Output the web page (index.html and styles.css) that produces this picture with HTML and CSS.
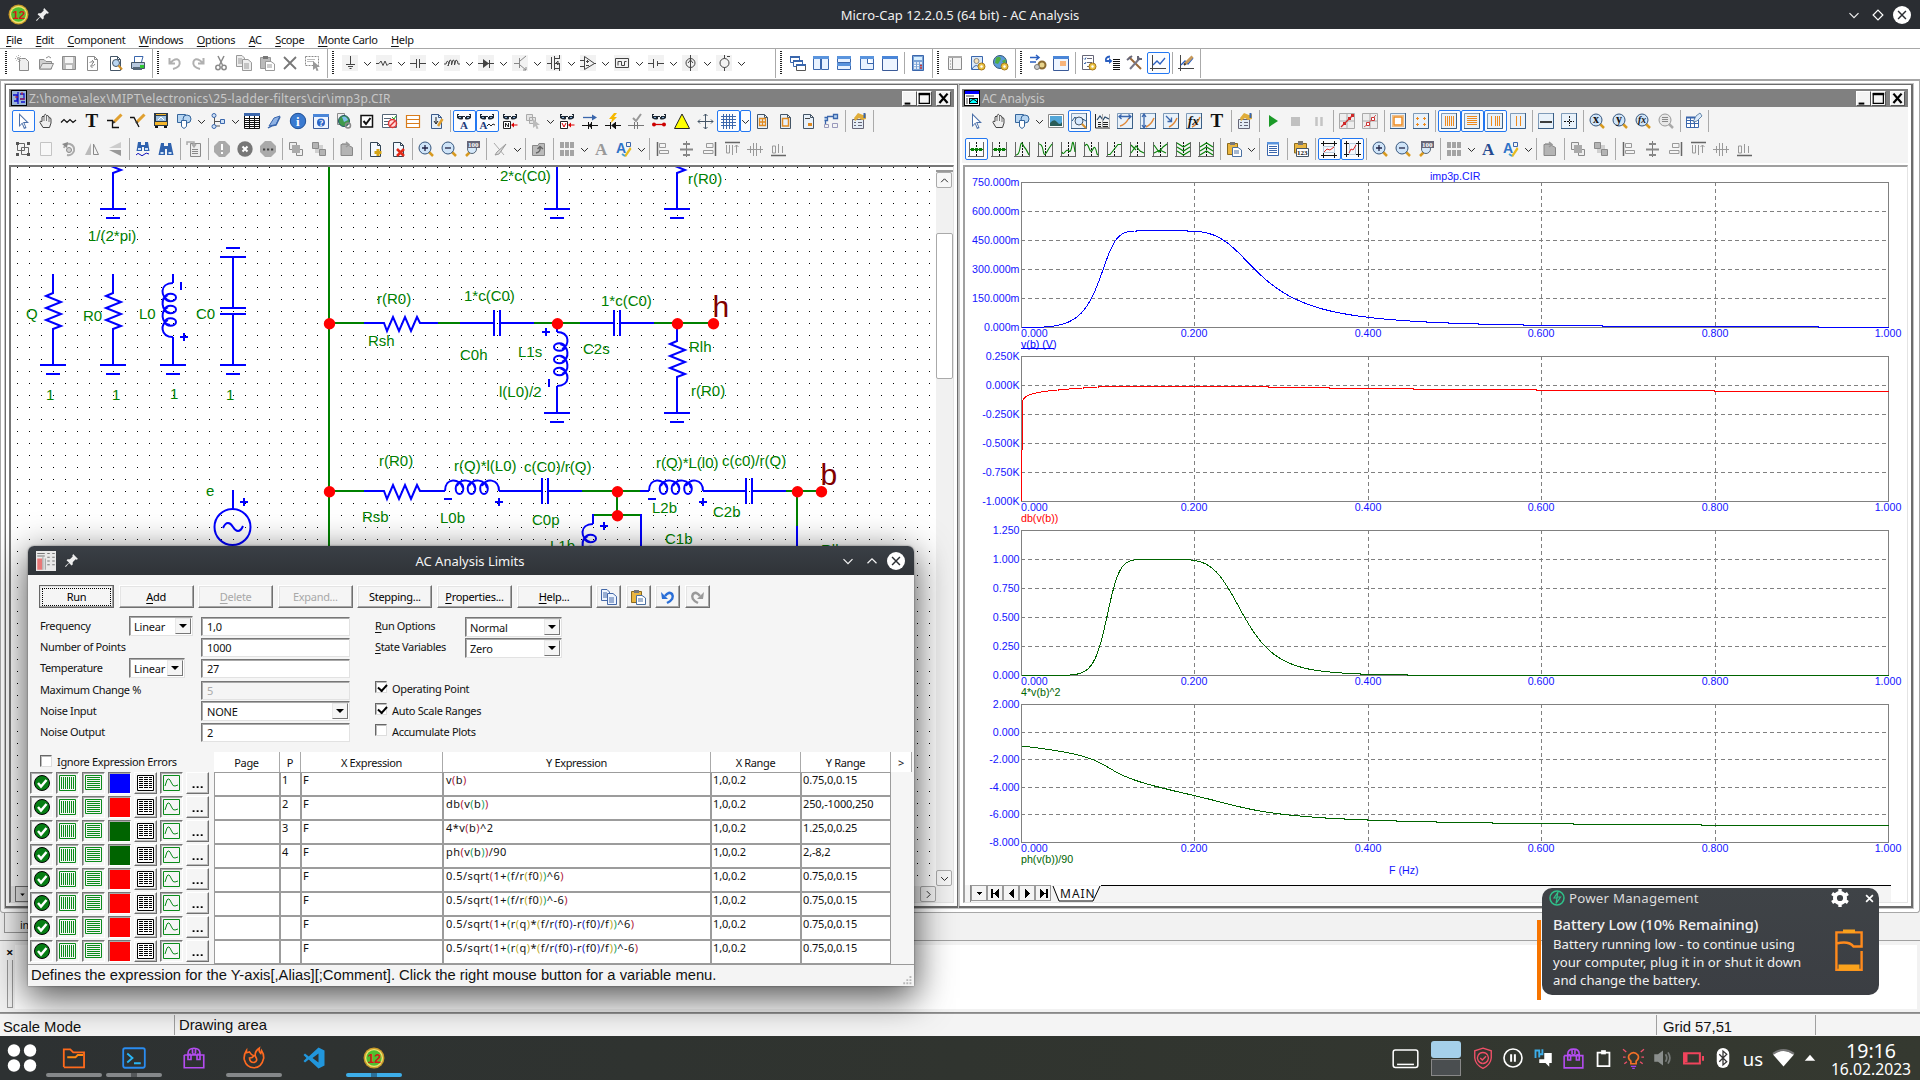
FILE: index.html
```html
<!DOCTYPE html>
<html lang="en">
<head>
<meta charset="utf-8">
<title>Micro-Cap 12.2.0.5 (64 bit) - AC Analysis</title>
<link rel="stylesheet" href="styles.css">
</head>
<body>
<div class="desktop">
  <header class="titlebar">
    <div class="titlebar-left"><span data-icon="mc" data-size="21"></span><span data-icon="pin" data-size="13"></span></div>
    <div class="titlebar-text">Micro-Cap 12.2.0.5 (64 bit) - AC Analysis</div>
    <div class="titlebar-right"><span data-icon="down" data-size="12"></span><span data-icon="diamond" data-size="12"></span><span data-icon="wclose" data-size="18"></span></div>
  </header>
  <nav class="menubar">
    <span><u>F</u>ile</span><span><u>E</u>dit</span><span><u>C</u>omponent</span><span><u>W</u>indows</span><span><u>O</u>ptions</span><span><u>A</u>C</span><span><u>S</u>cope</span><span><u>M</u>onte Carlo</span><span><u>H</u>elp</span>
  </nav>
  <div class="toolbar main-toolbar" data-tools="grip new open save reload preview print bar grip undo redo cut copyg pasteg del select bar grip c:gnd v c:res v c:cap v c:ind v c:diode v c:npn v c:mos v c:opamp v c:pulse v c:bat v c:isrc v c:vsrc v gap bar grip cascade tilev tileh tilemix maxi - calc bar grip panel usergear globegear bar grip watch winorange - listgear jump tools !graphs - graphedit bar"></div>

  <main class="mdi">
    <section class="window circuit">
      <div class="window-title"><span data-icon="cirwin" data-size="16"></span><span class="window-name">Z:\home\alex\MIPT\electronics\25-ladder-filters\cir\imp3p.CIR</span><div class="window-buttons"><b data-icon="wmin" data-size="13"></b><b data-icon="wmax" data-size="13"></b><b class="last" data-icon="wx" data-size="13"></b></div></div>
      <div class="toolbar" data-tools="!arrow hand wave T wire wirediag bus shapes v tree v table eraser info help globelink check listno rows editpage - !glassA !glassAw glassN layersg v glassV arrowcap boltcap checkcap glassline tri cross !grid !v pgrid pframe pbox conn - props -"></div>
      <div class="toolbar" data-tools="group rectg rotate flipx flipy - binoc binoc2 - sheetg - excl xcirc dots - front back - foldg - addpage delpage - zoomin zoomout zoom100 - pencilg v - upg - gridg v Ag Ab v - al1 al2 al3 al4 al5 al6"></div>
      <div class="pane">
        <svg class="schematic" viewBox="11 167 925 719" width="925" height="719">
          <defs>
            <pattern id="dots" x="17" y="167" width="12" height="12" patternUnits="userSpaceOnUse"><rect width="1" height="1" fill="#000"/></pattern>
            <g id="gnd"><path d="M-13 0H13M-7 9H7"/></g>
            <path id="resv" d="M0 0V19L-7 22 8 28-7 34 8 40-7 46 8 52 0 55V91"/>
            <path id="resh" d="M0 0H20L23 8 29-6 35 8 41-6 47 8 53-6 56 0H74"/>
            <path id="caph" d="M0-13V13M6-13V13"/>
            <path id="turns" d="M0 9C-14 9-13 24-3 27M-5 21C-13 24-12 37-3 39M-5 33C-13 37-12 49-3 51M-5 46C-13 49-13 63 0 63M-8 23.500a5.500 3.800 0 1 0 11 0a5.500 3.800 0 1 0-11 0M-8 35.500a5.500 3.800 0 1 0 11 0a5.500 3.800 0 1 0-11 0M-8 48a5.500 3.800 0 1 0 11 0a5.500 3.800 0 1 0-11 0"/>
            <g id="coil"><use href="#turns"/><path d="M8 8V16M7 63h8M11 59v8"/></g>
          </defs>
          <rect x="11" y="167" width="921" height="712" fill="url(#dots)"/>
          <g class="wire">
            <path d="M329 167V886M329 323H364M438 323H460M534 323H580M654 323H713M329 491H364M582 491H640M786 491H821M617 491V515M593 515H641M797 491V526"/>
          </g>
          <g class="part">
            <use href="#resv" x="113" y="118"/><use href="#gnd" x="113" y="209"/>
            <use href="#resv" x="53" y="274"/><use href="#gnd" x="53" y="365"/>
            <use href="#resv" x="113" y="274"/><use href="#gnd" x="113" y="365"/>
            <path d="M173 274V283M173 337V365"/><use href="#coil" x="173" y="274"/><use href="#gnd" x="173" y="365"/>
            <path d="M226 248H240M220 257H246M233 257V308M220 308H246M220 314H246M233 314V365"/><use href="#gnd" x="233" y="365"/>
            <path d="M557 167V209"/><use href="#gnd" x="557" y="209"/>
            <use href="#resv" x="677" y="118"/><use href="#gnd" x="677" y="209"/>
            <use href="#resh" x="364" y="323"/><path d="M460 323H494M500 323H534M580 323H614M620 323H654"/>
            <use href="#caph" x="494" y="323"/><use href="#caph" x="614" y="323"/>
            <path d="M557 323V332M557 386V413"/><use href="#coil" transform="translate(557 395) rotate(180)"/><use href="#gnd" x="557" y="413"/>
            <use href="#resv" x="677" y="322"/><use href="#gnd" x="677" y="413"/>
            <use href="#resh" x="364" y="491"/><path d="M438 491H445M499 491H542M548 491H582M640 491H649M703 491H746M752 491H786"/>
            <use href="#coil" transform="matrix(0 1 1 0 436 491)"/><use href="#coil" transform="matrix(0 1 1 0 640 491)"/>
            <use href="#caph" x="542" y="491"/><use href="#caph" x="746" y="491"/>
            <path d="M593 514V524M641 514V560M797 526V560M600 526h8M604 522v8"/><use href="#turns" x="593" y="515"/>
            <path d="M233 490V509M240 502h8M244 498v8"/><circle cx="232.500" cy="527" r="18"/><path d="M223 528C226 521 230 522 233 527S240 533 243 526"/>
          </g>
          <g class="node"><circle cx="329.500" cy="323.700" r="5.700"/><circle cx="557.500" cy="323.700" r="5.700"/><circle cx="677.500" cy="323.700" r="5.700"/><circle cx="713.500" cy="323.700" r="5.700"/><circle cx="329.500" cy="491.700" r="5.700"/><circle cx="617.500" cy="491.700" r="5.700"/><circle cx="797.500" cy="491.700" r="5.700"/><circle cx="821.500" cy="491.700" r="5.700"/><circle cx="617.500" cy="515.700" r="5.700"/></g>
          <g class="label">
            <text x="88" y="241">1/(2*pi)</text><text x="26" y="319">Q</text><text x="83" y="321">R0</text><text x="139" y="319">L0</text><text x="196" y="319">C0</text>
            <text x="46" y="400">1</text><text x="112" y="400">1</text><text x="170" y="399">1</text><text x="226" y="400">1</text>
            <text x="500" y="181">2*c(C0)</text><text x="688" y="184">r(R0)</text>
            <text x="377" y="304">r(R0)</text><text x="368" y="346">Rsh</text><text x="460" y="360">C0h</text><text x="464" y="301">1*c(C0)</text><text x="518" y="357">L1s</text><text x="583" y="354">C2s</text><text x="601" y="306">1*c(C0)</text><text x="689" y="352">Rlh</text><text x="691" y="396">r(R0)</text><text x="499" y="397">l(L0)/2</text>
            <text x="379" y="466">r(R0)</text><text x="454" y="471">r(Q)*l(L0)</text><text x="524" y="472">c(C0)/r(Q)</text><text x="656" y="468">r(Q)*L(l0)</text><text x="722" y="466">c(c0)/r(Q)</text>
            <text x="362" y="522">Rsb</text><text x="440" y="523">L0b</text><text x="532" y="525">C0p</text><text x="652" y="513">L2b</text><text x="713" y="517">C2b</text><text x="665" y="544">C1b</text><text x="550" y="551">L1b</text><text x="821" y="555">Rlb</text><text x="206" y="496">e</text>
          </g>
          <g class="netname"><text x="712.500" y="317">h</text><text x="820.500" y="485">b</text></g>
        </svg>
        <div class="vscroll"><i class="split"></i><i class="sbtn" data-icon="up" data-size="9"></i><i class="thumb"></i><i class="sbtn" data-icon="down" data-size="9"></i></div>
        <div class="hscroll"><i class="pagebtn" data-icon="tdown" data-size="9"></i><i class="sbtn" data-icon="right" data-size="9"></i></div>
      </div>
    </section>

    <section class="window analysis">
      <div class="window-title"><span data-icon="acwin" data-size="16"></span><span class="window-name">AC Analysis</span><div class="window-buttons"><b data-icon="wmin" data-size="13"></b><b data-icon="wmax" data-size="13"></b><b class="last" data-icon="wx" data-size="13"></b></div></div>
      <div class="toolbar" data-tools="arrow hand shapes v image !zoomgraph cursorg scale1 scale2 scale3 fx T - props - play stopg pauseg - redg1 redg2 - orange1 orange2 - !bars1 !bars2 !bars3 bars4 - hline crossd - lensx lensy lensf lensg - tablepen -"></div>
      <div class="toolbar" data-tools="!p1 p1 p2 p3 p4 p5 p6 p7 p8 p9 p10 - paste v - doc - num - !tagh !tagv - zoomin zoomout zoom100 - gridg v Anav Ab v - foldg - front back - al1 al2 al3 al4 al5 al6"></div>
      <div class="pane plots"><svg id="plots" viewBox="965 167 940 718" width="940" height="718"></svg>
        <div class="page-tabs"><i class="edge"></i><b data-icon="tdown" data-size="11"></b><b data-icon="first" data-size="11"></b><b data-icon="prev" data-size="11"></b><b data-icon="next" data-size="11"></b><b data-icon="last" data-size="11"></b>
          <svg class="tabshape" width="50" height="17" viewBox="0 0 50 17"><path d="M1 1L7 16H41L48 1" fill="#fff" stroke="#000"/></svg><span class="tabname">MAIN</span><i class="tabline"></i></div>
      </div>
    </section>
  </main>

  <div class="filetabs"><span>imp3p.CIR</span></div>
  <div class="message-panel"><div class="panel-handle"><b>×</b><i></i></div><div class="message-area"></div></div>
  <footer class="statusbar"><span class="s1">Scale Mode</span><span class="s2">Drawing area</span><span class="s3">Grid 57,51</span><span class="s4"></span></footer>

  <div class="taskbar">
    <div class="launcher" data-icon="launch" data-size="30"></div>
    <div class="task running" data-icon="files" data-size="24"></div>
    <div class="task running many" data-icon="term" data-size="24"></div>
    <div class="task" data-icon="bag" data-size="24"></div>
    <div class="task running" data-icon="fox" data-size="24"></div>
    <div class="task" data-icon="vscode" data-size="24"></div>
    <div class="task running many active" data-icon="mc" data-size="22"></div>
    <div class="tray">
      <span class="keyboard" data-icon="kbd" data-size="27"></span>
      <span class="pager"><i></i><i></i></span>
      <span data-icon="shield" data-size="22"></span><span data-icon="pause" data-size="20"></span><span data-icon="chat" data-size="20"></span><span data-icon="bag" data-size="23"></span><span data-icon="clip" data-size="19"></span><span data-icon="bulb" data-size="21"></span><span data-icon="volume" data-size="20"></span><span data-icon="batt" data-size="22"></span><span data-icon="bt" data-size="20"></span><span class="lang">us</span><span data-icon="wifi" data-size="21"></span><span class="arrow" data-icon="tup" data-size="12"></span>
    </div>
    <div class="clock"><span>19:16</span><small>16.02.2023</small></div>
  </div>
</div>

<section class="dialog">
  <header class="dialog-title"><span data-icon="dlg" data-size="20"></span><span data-icon="pin" data-size="13"></span><h1>AC Analysis Limits</h1><span class="dwin"><span data-icon="down" data-size="12"></span><span data-icon="up" data-size="12"></span><span data-icon="wclose" data-size="18"></span></span></header>
  <div class="buttons"><button class="default"><span>Run</span></button><button><u>A</u>dd</button><button disabled><u>D</u>elete</button><button disabled>Expand...</button><button>Stepping...</button><button><u>P</u>roperties...</button><button><u>H</u>elp...</button><button class="sq" data-icon="copy" data-size="16"></button><button class="sq" data-icon="paste" data-size="16"></button><button class="sq" data-icon="undob" data-size="16"></button><button class="sq" data-icon="redog" data-size="16"></button></div>
  <div class="form">
    <div class="fields">
      <label>Frequency</label><div class="select w63">Linear<i></i></div><div class="input">1,0</div>
      <label>Number of Points</label><span></span><div class="input">1000</div>
      <label>Temperature</label><div class="select w55">Linear<i></i></div><div class="input">27</div>
      <label>Maximum Change %</label><span></span><div class="input off">5</div>
      <label>Noise Input</label><span></span><div class="select wide">NONE<i></i></div>
      <label>Noise Output</label><span></span><div class="input">2</div>
    </div>
    <div class="options">
      <div class="opt"><label><u>R</u>un Options</label><div class="select w96">Normal<i></i></div></div>
      <div class="opt"><label><u>S</u>tate Variables</label><div class="select w96">Zero<i></i></div></div>
      <div class="checks"><div class="check on"><i></i>Operating Point</div><div class="check on"><i></i>Auto Scale Ranges</div><div class="check"><i></i>Accumulate Plots</div></div>
    </div>
  </div>
  <div class="lower">
    <div class="rowtools"><div class="check"><i></i>Ignore Expression Errors</div><div id="rowicons"></div></div>
    <div class="grid" id="grid"><b>Page</b><b>P</b><b>X Expression</b><b>Y Expression</b><b>X Range</b><b>Y Range</b><b>&gt;</b></div>
  </div>
  <footer class="dialog-status">Defines the expression for the Y-axis[,Alias][;Comment]. Click the right mouse button for a variable menu.<span data-icon="sizegrip" data-size="10"></span></footer>
</section>

<aside class="notice"><div class="notice-head"><span data-icon="power" data-size="16"></span><span class="app">Power Management</span><span data-icon="gear" data-size="18"></span><span class="x" data-icon="nx" data-size="9"></span></div>
  <div class="notice-body"><div><h2>Battery Low (10% Remaining)</h2><p>Battery running low - to continue using your computer, plug it in or shut it down and change the battery.</p></div><span data-icon="battbig" data-size="48"></span></div></aside>
<div class="notice-timer"></div>
<script src="app.js"></script>
</body>
</html>
```
FILE: styles.css
```css
* { box-sizing: border-box; }
body { margin: 0; width: 1920px; height: 1080px; overflow: hidden; font: 11px/16px "Noto Sans", sans-serif; letter-spacing: -.36px; color: #111; background: #fff; }
svg { display: block; flex: none; letter-spacing: 0; overflow: visible; }
.schematic, #plots { overflow: hidden; }
.desktop { width: 1920px; height: 1080px; display: flex; flex-direction: column; }
.titlebar { height: 29px; flex: none; background: #2a2d32; color: #f0f0f0; display: flex; align-items: center; justify-content: space-between; font-size: 13px; letter-spacing: 0; }
.titlebar-left, .titlebar-right { display: flex; align-items: center; width: 110px; }
.titlebar-left { padding-left: 8px; gap: 7px; }
.titlebar-right { justify-content: flex-end; gap: 12px; padding-right: 9px; }
.titlebar-right span:nth-child(2) { margin-right: -3px; }
.menubar { height: 20px; flex: none; display: flex; align-items: center; padding: 2px 0 0 6px; border-bottom: 1px solid #a8a8a8; background: #fff; }
.menubar span { margin-right: 13.500px; white-space: nowrap; }
u { text-underline-offset: 2px; }
.toolbar { display: flex; align-items: center; height: 28px; flex: none; padding-left: 3px; background: #f4f4f4; }
.main-toolbar { height: 32px; padding: 0 0 2px 4px; border-bottom: 2px solid #a6a6a6; background: #fff; }
.tool { width: 23px; height: 22px; flex: none; padding: 2px 0 0 2px; border: 1px solid transparent; border-radius: 2px; }
.tool.on { border-color: #2277f2; background: #fbfcfe; }
.tool.cmp svg { background: #f2f2f2; }
.tool.v { width: 11px; padding: 6px 0 0 0; }
.sep { width: 5px; height: 22px; flex: none; background: linear-gradient(#aaa, #aaa) 2px 0 / 1px 100% no-repeat; }
.sep.bar { width: 6px; height: 30px; }
.grip { width: 4px; height: 24px; flex: none; margin: 0 3px 0 1px; background: repeating-linear-gradient(#222 0 1px, #fff 1px 2px); background-size: 2px 100%; background-repeat: no-repeat; }
.gap { width: 26px; }

.mdi { height: 832px; flex: none; display: flex; padding: 3px 5px 4px 4px; border: 1px solid #a8a8a8; border-top: 0; border-radius: 0 0 3px 3px; background: #fff; }
.window { height: 824px; display: flex; flex-direction: column; border: solid #6c6c6c; border-width: 1px 2px 2px 1px; padding: 4px 3px 3px; outline: 1px solid #c4c4c4; }
.circuit { width: 954px; }
.analysis { width: 954px; border-left: 0; }
.window-title { height: 18px; flex: none; background: #808080; color: #c8c8c8; display: flex; align-items: center; font-size: 12px; gap: 2px; padding-left: 2px; letter-spacing: .23px; }
.analysis .window-title { letter-spacing: -.1px; }
.window-name { white-space: nowrap; padding-top: 2px; }
.window-buttons { margin-left: auto; display: flex; padding-right: 3px; }
.window-buttons b { width: 15px; height: 15px; display: grid; place-items: center; background: #f4f4f4; border: 1px solid; border-color: #fff #555 #555 #fff; }
.window-buttons .last { margin-left: 4px; }
.pane { flex: 1; margin-top: 2px; border: solid; border-width: 2px 1px 1px 2px; border-color: #777 #e4e4e4 #e4e4e4 #777; display: grid; grid-template: 719px 1fr / 925px 1fr; background: #fff; overflow: hidden; }
.wire path, .part path, .part circle, .part use { fill: none; stroke-width: 2; }
.wire { stroke: #008000; }
.part { stroke: #0000ff; }
.node { fill: #f00; }
.label { font: 15px "Liberation Sans", Arial, sans-serif; fill: #008000; }
.netname { font: 30px "Liberation Sans", Arial, sans-serif; fill: #800000; }
.vscroll { display: flex; flex-direction: column; background: #f1f1f1; grid-row: span 2; }
.vscroll .split { height: 5px; border-bottom: 2px solid #999; background: #fff; }
.sbtn { width: 16px; height: 16px; display: grid; place-items: center; border: 1px solid #aaa; border-radius: 2px; background: #f7f7f7; }
.vscroll .thumb { height: 146px; margin: 45px 0 auto; background: #fff; border: 1px solid #aaa; border-radius: 2px; }
.vscroll .sbtn:last-child { margin-bottom: 16px; }
.hscroll { display: flex; justify-content: space-between; background: #ededed; }
.pagebtn { width: 15px; margin-left: 4px; background: #eee; border: 1px solid #777; display: grid; place-items: center; }
.plots { grid-template: 718px 1fr / 1fr; border-color: #a0a0a0 #e4e4e4 #e4e4e4 #a0a0a0; margin-left: 1px; }
.plots text { font: 10.670px "Liberation Sans", Arial, sans-serif; fill: #1414ff; }
.plots path, .plots polyline { shape-rendering: crispEdges; }
.page-tabs { display: flex; background: #f4f4f4; margin-right: 16px; }
.page-tabs .edge { width: 6px; border-right: 1px solid #888; }
.page-tabs b { width: 16px; height: 16px; display: grid; place-items: center; background: #f4f4f4; border: 1px solid; border-color: #fff #666 #666 #ccc; outline: 1px solid #999; outline-offset: -1px; }
.page-tabs .tabshape path { shape-rendering: auto; }
.tabshape { margin-left: 1px; }
.tabname { font-size: 12px; letter-spacing: 1px; margin-left: -42px; width: 43px; z-index: 1; padding-top: 1px; }
.tabline { flex: 1; border-top: 1px solid #000; margin-left: -2px; }

.filetabs { height: 28px; flex: none; background: #f2f2f2; border-bottom: 1px solid #a0a0a0; padding: 0 4px; }
.filetabs span { display: inline-block; padding: 4px 15px 2px; border: solid #999; border-width: 0 1px 1px; height: 20px; }
.message-panel { height: 72px; flex: none; display: flex; background: #f2f2f2; border-bottom: 1px solid #888; padding: 4px 3px 3px; }
.panel-handle { width: 12px; padding-left: 1px; display: flex; flex-direction: column; align-items: center; gap: 3px; }
.panel-handle b { font-size: 13px; line-height: 14px; height: 12px; }
.panel-handle i { width: 6px; height: 48px; border: solid #999; border-width: 0 1px 1px; }
.message-area { flex: 1; background: #fff; }
.statusbar { height: 23px; flex: none; border-top: 1px solid #999; background: #f4f4f4; display: flex; font: 14.800px/22px "Liberation Sans", Arial, sans-serif; letter-spacing: 0; }
.statusbar span { padding: 1px 0 0 3px; height: 20px; margin-top: 1px; }
.statusbar .s1 { width: 174px; }
.statusbar .s2 { width: 1482px; border-left: 1px solid #a0a0a0; padding: 0 0 0 4px; line-height: 20px; }
.statusbar .s3 { width: 159px; border-left: 1px solid #a0a0a0; padding-left: 6px; }
.statusbar .s4 { border-left: 1px solid #a0a0a0; }

.taskbar { position: relative; z-index: 2; height: 44px; flex: none; display: flex; background: linear-gradient(90deg, #2d3132, #30342f 50%, #353930); color: #fff; letter-spacing: 0; }
.launcher { width: 44px; display: grid; place-items: center; }
.task { width: 60px; display: grid; place-items: center; position: relative; }
.running::after { content: ""; position: absolute; left: 2px; right: 2px; bottom: 3px; height: 4px; border-radius: 2px; background: #85888a; }
.many::after { background: linear-gradient(90deg, #85888a 25px, #55585a 25px 31px, #85888a 31px); }
.active::after { background: linear-gradient(90deg, #3daee9 25px, #2b719a 25px 31px, #3daee9 31px); }
.tray { margin-left: auto; display: flex; align-items: center; }
.tray span { width: 30px; display: grid; place-items: center; }
.tray .keyboard { margin-right: 11px; }
.tray .pager { width: 30px; margin-right: 7px; gap: 1px; }
.tray .pager i { width: 30px; height: 17px; background: #4a4e50; border: 1px solid #888; }
.tray .pager i:first-child { background: #a5d0ea; border: 0; border-radius: 3px; }
.tray .lang { font-size: 18.500px; padding-top: 1px; }
.tray .arrow { width: 24px; }
.clock { width: 98px; display: flex; flex-direction: column; align-items: center; font-size: 19.500px; line-height: 20px; padding-top: 5px; }
.clock small { font-size: 15.700px; line-height: 17px; }

.dialog { position: absolute; left: 28px; top: 546px; width: 886px; height: 440px; background: #f5f5f5; border-radius: 6px 6px 0 0; box-shadow: 0 10px 36px 2px rgba(0,0,0,.68), 0 0 2px rgba(0,0,0,.5); z-index: 1; clip-path: inset(-60px -60px -50px -60px); }
.dialog-title { height: 29px; display: flex; align-items: center; padding: 0 9px 0 8px; gap: 9px; background: linear-gradient(#3a3f46, #2f3337); border-radius: 6px 6px 0 0; color: #f4f4f4; letter-spacing: 0; }
.dialog-title h1 { flex: 1; margin: 0 0 0 20px; text-align: center; font-size: 13px; font-weight: 400; }
.dwin { display: flex; align-items: center; gap: 12px; }
.dwin span:last-child { margin-left: -3px; }
.buttons { display: flex; gap: 4.600px; padding: 10px 0 0 11px; height: 33px; }
button { width: 75px; height: 23px; padding: 0; flex: none; font: 11px/16px "Noto Sans", sans-serif; letter-spacing: -.3px; color: #000; background: #f5f5f5; border: 1px solid; border-color: #fff #707070 #707070 #fff; box-shadow: inset -1px -1px #a5a5a5, inset 1px 1px #e4e4e4; text-align: center; white-space: nowrap; }
button:disabled { color: #a8a8a8; }
button.default { border: 1px solid #666; }
.default span { display: block; margin: 0 auto; border: 1px dotted #000; width: 69px; line-height: 16px; height: 18px; }
button.sq { width: 25px; }
.sq svg { margin: 0 auto; }
.form { display: flex; padding: 8px 0 0 12px; height: 136px; }
.fields { display: grid; flex: none; grid-template-columns: 89px 72px 149px; grid-auto-rows: 21.200px; width: 335px; }
.fields label, .opt label { line-height: 20px; white-space: nowrap; }
.input, .select { height: 19px; flex: none; line-height: 17px; padding-left: 5px; background: #fff; border: 1px solid; border-color: #777 #e2e2e2 #e2e2e2 #777; box-shadow: inset 1px 1px #aaa; margin-top: 1px; letter-spacing: -.2px; }
.off { background: #f5f5f5; color: #aaa; }
.select { height: 20px; display: flex; justify-content: space-between; padding: 1px 1px 0 4px; margin-top: 0; }
.select i { width: 16px; height: 16px; margin-top: 0; background: #f5f5f5; border: 1px solid; border-color: #e8e8e8 #777 #777 #e8e8e8; display: grid; place-items: center; }
.select i::after { content: ""; border: 4px solid transparent; border-top-color: #000; border-bottom: 0; }
.w63 { width: 64px; } .w55 { width: 56px; } .w96 { width: 97px; } .wide { padding-left: 5px; width: 149px; }
.opt { display: flex; height: 21px; }
.opt label { width: 90px; }
.opt .select { margin-top: 1px; }
.checks { padding-top: 21px; }
.check { display: flex; gap: 5px; height: 21.500px; line-height: 20px; white-space: nowrap; letter-spacing: -.33px; }
.check i { width: 12px; height: 12px; flex: none; margin-top: 2px; background: #fff; border: 1px solid; border-color: #666 #ddd #ddd #666; box-shadow: inset 1px 1px #bbb; }
.check.on i::after { content: ""; display: block; width: 7px; height: 4px; margin: 2px 0 0 2px; border: solid #000; border-width: 0 0 2px 2px; transform: rotate(-48deg); }
.lower { display: flex; height: 220px; padding-top: 8px; }
.rowtools { width: 186px; padding-left: 2px; }
.rowtools .check { padding-left: 10px; height: 20px; }
.rowtools .check i { margin-top: 3px; }
.rowicons { display: flex; gap: 3px; height: 24px; }
.rowicons span { width: 23px; height: 22px; display: grid; place-items: center; border: 1px solid; border-color: #777 #fff #fff #777; box-shadow: inset 1px 1px #aaa; }
.rowicons .raised { border-color: #fff #707070 #707070 #fff; box-shadow: inset -1px -1px #bbb; }
.grid { display: grid; grid-template-columns: 66px 21px 142px 268px 90px 90px 21px; grid-template-rows: 20px; grid-auto-rows: 24px; }
.grid b { font-weight: 400; text-align: center; background: #fff; border-right: 1px solid #aaa; line-height: 22px; }
.grid div { background: #fff; border: 1px solid #9c9c9c; line-height: 14px; padding-left: 1px; white-space: nowrap; letter-spacing: -.15px; }
.grid div.expr { padding-left: 2px; letter-spacing: .45px; }
.grid div.none { background: none; border: 0; }
.k1 { color: #b0203c; } .k2 { color: #18a060; } .k3 { color: #b8a820; } .k4 { color: #2020c8; }
.dialog-status { height: 22px; border-top: 1px solid #999; padding: 2px 2px 0 3px; font: 14.760px/21px "Liberation Sans", Arial, sans-serif; letter-spacing: 0; display: flex; justify-content: space-between; align-items: end; background: #f4f4f4; white-space: nowrap; }

.notice { position: absolute; left: 1542px; top: 888px; width: 337px; height: 107px; z-index: 3; border-radius: 10px; background: linear-gradient(#3f4347, #3b3e43); color: #f0f0f0; letter-spacing: 0; }
.notice-head { display: flex; align-items: center; padding: 0 5px 0 7px; height: 20px; font-size: 13.300px; }
.notice-head .app { flex: 1; margin-left: 4px; letter-spacing: .2px; color: #dcdcdc; }
.notice-head .x { margin-left: 16px; }
.notice-body { display: flex; justify-content: space-between; padding: 6px 6px 0 11px; }
.notice h2 { margin: 0 0 1px; font-size: 14.700px; font-weight: 500; line-height: 20px; white-space: nowrap; }
.notice p { margin: 0; width: 252px; font-size: 13.180px; line-height: 18px; }
.notice-body > span { margin-top: 13px; }
.notice-timer { position: absolute; left: 1537px; top: 920px; width: 4px; height: 80px; background: #f67400; z-index: 3; }
```
FILE: app.js
```js
// Stroke and fill helpers for 16x16 icons.
const s = (d, c = '#444', w = 1, f = 'none') => `<path d="${d}" stroke="${c}" stroke-width="${w}" fill="${f}"/>`;
const f = (d, c) => `<path d="${d}" fill="${c}"/>`;
const t = (str, x, y, size, c, font = 'Liberation Serif', w = 700) => `<text x="${x}" y="${y}" font-size="${size}" fill="${c}" font-family="${font}" font-weight="${w}">${str}</text>`;
const c = (x, y, r, fill, st = 'none', w = 1) => `<circle cx="${x}" cy="${y}" r="${r}" fill="${fill}" stroke="${st}" stroke-width="${w}"/>`;
const page = (col, fill = '#fff') => s('M3.5 1.500H10.500L13.500 4.500V15.500H3.500ZM10.500 1.500V4.500H13.500', col, 1, fill);
const win = (inner) => s('M.5 1.500H15.500V15.500H.5Z', '#3a5a98', 1, '#eef5ff') + f('M0 1H16V4H0Z', '#4a86d8') + (inner || '');
const box = inner => s('M.5 .5H15.500V15.500H.5Z', '#7f9bb8', 1, '#e9f2fa') + s('M0 15.500H15.500V0', '#3a5f86') + inner;
const glass = f('M1 1H3V2H2V3H7V6Q4.500 7.500 1 5ZM15 1H13V2H14V3H9V6Q11.500 7.500 15 5ZM6 3H10V4H6Z', '#1c2733') + s('M3 4.500h2M11 4.500h2', '#8db4dc');
const lens = (inner, col = '#35557c', fill = '#cfe4f8') => s('M10.500 10.500L15 15', col === '#999' ? '#aaa' : '#d89a20', 2.500) + c(7, 7, 6, fill, col, 1) + inner;
const greens = (d, mid = true) => s('M1.500 1V15M0 15.500H16M15.500 1V15', '#666') + (mid ? '<path d="M8.500 1V15" stroke="#111" stroke-dasharray="2 1"/>' : '') + s(d, '#078007', 1.100);
const axes = s('M2.500 0V16M0 13.500H16', '#444') + s('M3 10L7 6 10 9 15 3', '#2a5fc0', 1.300);
const pencil = (k = '#e0a030') => s('M14.500 1.500L7 9', k, 3) + s('M7.500 8.500L6 10', '#333', 2);
const shapes = (a, b) => s('M1.500 1.500H9.500V9.500H1.500Z', a, 1, b) + c(11, 6, 4, b, a) + s('M5.500 7.500H10.500V13.500L8 15.500 5.500 13.500Z', a, 1, '#fff');
const docs = (a, b) => s('M.5 .5H6L8.500 3V11.500H.5ZM2 4h4M2 6h4M2 8h4', a, 1, b) + s('M6.500 4.500H12L15.500 7.500V15.500H6.500ZM8 9h5M8 11h5M8 13h5', a, 1, b);
const clipb = (a, b) => s('M1.500 2.500H11.500V13.500H1.500Z', a, 1, b) + f('M4 1H9V4H4Z', '#777') + s('M6.500 6.500H12L15.500 9V15.500H6.500ZM8 10h5M8 12h5', a === '#999' ? a : '#4a6fa0', 1, '#fff');
const G = '#8a8a8a', L = '#d0d0d0', B = '#3a66ac', LB = '#b9d5f2';

const icons = {
  mc: c(8, 8, 7.600, '#c89a28') + c(8, 8, 6.600, '#f0e070') + c(8, 8, 5.600, '#4fbf30') + t('12', 3.300, 11.300, 8.800, '#d81818', 'Liberation Sans'),
  pin: f('M10 0L16 6 14 7 13 6.500 9.500 10 9.500 13 8 14 5 11 1 16 0 15 5 10.500 2 8 3 6.500 6 6.500 9.500 3 9 2Z', '#eee'),
  down: s('M2 5.500L8 11.500 14 5.500', 'currentColor', 1.600), up: s('M2 11L8 5 14 11', 'currentColor', 1.600), right: s('M5 2L11 8 5 14', 'currentColor', 1.600),
  diamond: s('M8 1.500L14.500 8 8 14.500 1.500 8Z', '#fff', 1.600),
  wclose: c(8, 8, 8, '#fff') + s('M4.500 4.500L11.500 11.500M11.500 4.500L4.500 11.500', '#2a2d32', 1.300),
  wmin: f('M2 13H9V15.500H2Z', '#000'), wmax: s('M1.500 2H14V14H1.500Z', '#000', 1.500) + f('M1 1H15V4H1Z', '#000'), wx: s('M3 2L13 13.500M13 2L3 13.500', '#000', 2.800),
  cirwin: f('M0 0H16V16H0Z', '#000') + f('M1 1H15V15H1Z', '#9bb5d8') + s('M2 5h4v6H3M7 2v12M9 4h4v5H9M10 12h4', '#11c', 1.300) + s('M4 7h3M11 2v3M9 9h5', '#c22'),
  acwin: f('M0 0H16V16H0Z', '#000') + f('M1 4H15V15H1Z', '#fff') + f('M1 1H15V4H1Z', '#00f') + f('M5 8H14V14H5Z', '#000') + f('M6 9H13V13H6Z', '#0ff') + s('M6 12Q9 7 13 12', '#000') + s('M2 6h8M2 9h2M2 11h2M2 13h2'),
  tdown: f('M4 6H12L8 10.500Z', '#000'), tup: f('M1 11.500L8 3.500 15 11.500Z', '#fff'),
  first: f('M2 2H4V14H2ZM13 1V15L5 8Z', '#000'), prev: f('M11 1V15L4 8Z', '#000'), next: f('M5 1V15L12 8Z', '#000'), last: f('M12 2H14V14H12ZM3 1V15L11 8Z', '#000'),
  'new': s('M4.500 3.500H10.500L13.500 6.500V15.500H4.500Z', G, 1, '#eee') + '<path d="M3.500 0V7M0 3.500H7M1 1L6 6M6 1L1 6" stroke="#aaa" stroke-dasharray="1 1"/>',
  open: s('M1.500 14V4.500H6L8 6.500H13.500V14Z', G, 1, L) + s('M1.500 14L4.500 8.500H15.500L13 14Z', G, 1, '#e6e6e6') + s('M8 3Q11 0 13 3', G),
  save: s('M1.500 1.500H14.500V14.500H1.500Z', G, 1, '#bbb') + f('M4 2H12V8H4ZM5 10H11V14H5Z', '#f6f6f6'),
  reload: page(G) + s('M5.500 8Q6 6 9.500 7M8 5l2 2-2 2M11 9Q10 11.500 7 11M8.500 9l-2 2 2 2', G),
  preview: page('#456') + c(9, 8, 3.500, LB, '#456') + s('M11.500 10.500L15 14.500', '#d0902a', 2),
  print: s('M4.500 7V1.500H13L11.500 7', B, 1, '#fff') + s('M1.500 7.500H14.500V13.500H1.500Z', '#456', 1, '#b7c8dd') + f('M3 12H12V15H3Z', '#567') + f('M10 10H14V13H10Z', '#2fc832'),
  undo: s('M6 14Q14 12 12.500 6.500Q11 2.500 6 5.500L3 8M2.500 3V8.500H8', '#b0b0b0', 2), redo: s('M10 14Q2 12 3.500 6.500Q5 2.500 10 5.500L13 8M13.500 3V8.500H8', '#b0b0b0', 2),
  undob: s('M7 14Q15 10 12 5Q9 2 5 7', '#2a6fd8', 2.500) + f('M1 3L2 10H8Z', '#2a6fd8'), redog: s('M9 14Q1 10 4 5Q7 2 11 7', '#999', 2.500) + f('M15 3L14 10H8Z', '#999'),
  cut: s('M5 1L9.500 10M11 1L6.500 10', G, 1.500) + c(5, 12.500, 2.200, 'none', G, 1.500) + c(11, 12.500, 2.200, 'none', G, 1.500),
  copyg: docs('#999', '#eee'), copy: docs('#4468a8', '#eef5ff'), pasteg: clipb('#999', '#bbb'), paste: clipb('#8a6a20', '#eab640'),
  del: s('M2 2L14 14M14 2L2 14', '#777', 1.800), select: '<rect x=".5" y="1.500" width="13" height="9" fill="none" stroke="#888" stroke-dasharray="2 1"/>' + s('M2 6.500h7M2 4.500h8', '#bbb') + f('M8 6L15 12H12L13.500 15.500 11.500 16 10.500 13 8 15Z', '#999'),
  gnd: s('M8.500 1V9M4 9.500H13M6 11.500H11M7.500 13.500H9.500'), res: s('M0 8.500H3L5 6 7 10.500 9 6 11 10.500 13 8.500H16'), cap: s('M0 8.500H6M10 8.500H16M6.500 4V13M9.500 4V13'), ind: s('M0 9H2Q3 4 5 8L4 11 6 5Q8 5 7.500 10L9 5Q11 5 10.500 10L12 5Q14 5 14 9H16'),
  diode: s('M0 8.500H16M11.500 5V13') + f('M5 4V13L11 8.500Z', '#444'), npn: s('M2 8.500H7M7.500 3V13M8 6L14 1M8 10L14 15M11 15h3v-3', '#888'), mos: s('M1 8.500H5M5.500 2V14M8.500 1V15M9 3.500H14M9 8.500H14M9 13.500H14M13.500 0V3M13.500 8V16M10 8l2-2v4z'), opamp: s('M4.500 1.500V14.500L14.500 8.500ZM0 5.500H4M0 11.500H4M14 8.500h2M6 6.500h3M7.500 5v3M6 10.500h3'),
  pulse: s('M1.500 3.500H14.500V12.500H1.500ZM4 10.500V6.500H7.500V10.500H10.500V6.500H12.500', '#444'), bat: s('M0 8.500H5.500M5.500 4v9M9.500 6V11M9.500 8.500H16'), isrc: s('M8.500 0V16M6 8L8.500 5 11 8') + c(8.500, 8, 4.500, 'none', '#444'), vsrc: s('M8.500 0V3.500M8.500 12.500V16M11 1.500h3') + c(8.500, 8, 4.500, 'none', '#444'),
  cascade: s('M.5 1.500H9.500V7.500H.5Z', B, 1, '#fff') + s('M0 2H10', B, 2) + s('M3.500 5.500H12.500V11.500H3.500Z', B, 1, '#fff') + s('M3 6H13', B, 2) + s('M6.500 9.500H15.500V15.500H6.500Z', '#555', 1, '#fff') + s('M6 10H16', B, 2),
  tilev: s('M.5 1.500H7.500V14.500H.5ZM8.500 1.500H15.500V14.500H8.500Z', B, 1, '#e8f2ff') + f('M0 1H16V4H0Z', '#5a94dd'), tileh: s('M1.500 1.500H14.500V7.500H1.500ZM1.500 8.500H14.500V14.500H1.500Z', B, 1, '#e8f2ff') + f('M1 1H15V4H1ZM1 8H15V11H1Z', '#5a94dd'),
  tilemix: s('M1.500 1.500H14.500V14.500H1.500ZM8.500 1V8.500H14', B, 1, '#e8f2ff') + f('M1 1H15V4H1Z', '#5a94dd'), maxi: win(),
  calc: s('M2.500 .5H13.500V15.500H2.500Z', B, 1, '#7ba3d6') + f('M4 2H12V5H4Z', '#d8f0ff') + s('M4 8h2M7 8h2M10 8h2M4 10.500h2M7 10.500h2M4 13h2M7 13h2', '#fff', 1.500) + s('M10 10.500h2M10 13h2', '#c33', 1.500),
  panel: s('M1.500 1.500H14.500V14.500H1.500Z', G, 1, '#f4f4f4') + f('M1 1H15V3H1Z', '#aaa') + s('M5.500 3V15', G) + s('M3 6h1M3 9h1M3 12h1', G),
  usergear: s('M1.500 1.500H12.500V14.500H1.500Z', B, 1, '#dbe9f8') + c(6.500, 6, 2.500, '#f6e2b8', '#888') + s('M2 14Q6 7 11 14', B) + c(11.500, 11.500, 3.500, '#eac343', '#a87818') + c(11.500, 11.500, 1.200, '#fff'),
  globegear: c(7, 7, 6.500, '#5b9bd8', '#357') + f('M3 3Q7 0 8 4L5 9 2 8ZM9 6L13 4 12 10Z', '#4fae42') + c(11.500, 11.500, 3.500, '#eac343', '#a87818') + c(11.500, 11.500, 1.200, '#fff'),
  watch: s('M0 2.500H8M6 0L9 2.500 6 5M0 7H6', '#2a5fc0', 1.500) + c(12, 10, 3.500, '#e8d48c', '#8a6a30', 2) + c(7, 12, 2.500, '#ccc', '#777'), winorange: win(f('M7 6H13V11H7Z', '#f7b37a')),
  listgear: s('M1.500 .5H12.500V14.500H1.500ZM6 3.500h5M6 7.500h5M6 11.500h5', '#667', 1, '#fff') + s('M3 3.500l1 1 1-2M3 8l1 1 1-2', B) + c(11.500, 11.500, 3.500, '#eac343', '#a87818') + c(11.500, 11.500, 1.200, '#fff'),
  jump: s('M6 1.500Q1 2 2 6H6', '#2a5fc0', 1.800) + f('M5 3L8.500 6 5 9Z', '#2a5fc0') + s('M9 4.500H16M9 6.500H16M9 8.500H16M9 10.500H16M9 12.500H16M9 14.500H16', '#111', 1), tools: s('M2 2L14 14', '#9a6a3a', 2) + s('M13 3L3 14', '#778', 2) + s('M0 5L5 1M11 1v3h4', '#667', 2),
  graphs: axes, graphedit: axes + pencil('#c89a5a'),
  arrow: f('M4 0V14L7 11 9 16 11.500 15 9.500 10H14Z', '#4a6fa8') + f('M5 2.500V12L7.300 9.500 9.500 14.500 10.300 14 8 9H11.500Z', '#fff'),
  hand: s('M5 14.500L2 9.500Q1.500 7.500 4 8.500V4Q5 2 6 4V2.500Q7.500 0 8.500 2.500V3Q10 1.500 11 4V5Q12.500 4 13 6V10L11.500 14.500Z', '#444', 1, '#eee') + s('M6 4V8M8.500 3V8M11 5V9', '#777'),
  wave: s('M0 9.500L3 6.500 6 9.500 9 6.500 12 9.500 15 7', '#111', 1.200), T: t('T', 1.500, 14, 19, '#111'),
  wire: s('M0 7.500H5.500V14.500H12', '#111', 1.300) + pencil(), wirediag: s('M0 4.500h4L9 14', '#111', 1.300) + pencil(),
  bus: f('M1 0H15V13H1Z', '#2c3a48') + f('M2 9H14V12H2Z', '#f4b62c') + f('M3 3H13V8H3Z', '#9fc3e4') + s('M3 1.500H13', '#f4b62c') + f('M2 13H5V15H2ZM11 13H14V15H11Z', '#111') + s('M5 7L8 4 11 7', '#fff'),
  shapes: shapes('#34659c', '#b8d6f2'), tree: s('M4.500 4V13H10M4 8.500H10', '#555') + c(4, 2.500, 2, '#cfe2f6', B) + c(4, 13.500, 2, '#cfe2f6', B) + s('M10.500 6.500H14.500V10.500H10.500Z', B, 1, '#cfe2f6'),
  table: s('M.5 1.500H15.500V15.500H.5Z', '#111', 1, '#fff') + f('M0 0H16V3H0Z', '#3a66ac') + s('M1 5.500H15M1 7.500H15M1 9.500H15M1 11.500H15M1 13.500H15M5.500 3V15M10.500 3V15', '#111'),
  eraser: s('M2 13L7 5 13 3 9 12Z', B, 1, '#8fb2e4') + s('M1 15Q5 12 9 12L13 4', B, 1.500), info: c(8, 8, 7.700, '#3a7ad0', '#1f4f96') + t('i', 6, 13, 13, '#fff'),
  help: win(c(8, 9.500, 4, '#2a66c8') + t('?', 6, 13, 9, '#fff')), globelink: s('M1.500 .5H8.500V11.500H1.500Z', G, 1, '#eee') + c(8, 8, 5.500, '#3f9a4a', '#256') + f('M6 4Q10 2 12 7L8 9Z', '#7fc0ee') + c(12, 12.500, 2.500, 'none', '#888', 1.500),
  check: s('M2 2.500H13.500V14H2Z', '#111', 1.500, '#fff') + s('M4.500 8L7 11 11.500 5', '#111', 2), listno: s('M.5 1.500H14.500V14.500H.5ZM2 5.500H9M2 8.500H7M2 11.500H6', '#567', 1, '#fff') + c(10.500, 10.500, 4, '#fdd', '#d33', 1.500) + s('M8 13L13 8', '#d33', 1.500) + s('M10 4l2 2 2-3', '#2a2'),
  rows: s('M1.500 2.500H14.500V14.500H1.500ZM2 6.500H14M2 10.500H14', '#d87c1c', 1.200, '#fff'), editpage: page('#3a5a8a', '#e4effa') + s('M8 4v6M6 8l2 3 2-3', '#222') + s('M14.500 6L10 13', '#e0a030', 2.500),
  glassA: glass + t('A', 4, 15.800, 11, '#1c3a7a'), glassAw: glass + t('A', .5, 15.800, 11, '#1c3a7a') + s('M8 13L10 11 12 13 14 11 16 12', '#222'), glassN: glass + s('M1.500 8.500H8.500V15.500H1.500Z', '#222', 1, '#fff') + s('M3.500 14V10L6.500 14V10', '#222') + f('M9 12L12 9.500V11.500H15.500V12.500H12V14.500Z', '#d00'), glassV: glass + s('M1.500 8.500H8.500V15.500H1.500Z', '#222', 1, '#fff') + s('M3 10L5 14 7 10', '#d00') + f('M9 12L12 9.500V11.500H15.500V12.500H12V14.500Z', '#d00'),
  layersg: s('M1.500 1.500H7.500V7.500H1.500ZM4.500 4.500H10.500V10.500H4.500Z', '#aaa', 1, '#e4e4e4') + f('M8 6L15 12H12L13.500 15.500 11.500 16 10.500 13 8 15Z', '#bbb'),
  arrowcap: s('M1 4.500H13', B, 1.300) + f('M10 1.500L15 4.500 10 7.500Z', B) + s('M0 12.500H6M10 12.500H16M6.500 9V16M9.500 9V16', '#111') + f('M6 12.500L10 9.500V15.500Z', '#111'), boltcap: f('M9 0L4 6H7L6 10 12 4H9L12 0Z', '#f5b800') + s('M0 12.500H5M11 12.500H16M5.500 9V16M10.500 9V16', '#111') + f('M6 12.500L10 9.500V15.500Z', '#111'), checkcap: s('M5 5L8 8 13 1', '#999', 2) + s('M0 12.500H16M6.500 9V16M9.500 9V16', '#777'), glassline: glass + s('M2 11.500H14', '#c00', 1.300) + c(3, 11.500, 2, '#c00') + c(13, 11.500, 2, '#c00'),
  tri: s('M8 1L15.500 15.500H.5Z', '#222', 1, '#ff0'), cross: s('M8.500 1V16M1 8.500H16M6.500 3L8.500 1 10.500 3M6.500 14L8.500 16 10.500 14M3 6.500L1 8.500 3 10.500M14 6.500L16 8.500 14 10.500', '#456'), grid: s('M3.500 1V16M6.500 1V16M9.500 1V16M12.500 1V16M1 3.500H16M1 6.500H16M1 9.500H16M1 12.500H16', B),
  pgrid: page('#456', '#e8f1fa') + s('M5.500 5.500H11.500V12.500H5.500ZM5 9H12M8.500 5V13', '#e08a20', 1.300), pframe: page('#456', '#e8f1fa') + s('M5.500 5.500H11.500V13H5.500Z', '#e08a20', 1.500), pbox: page('#456', '#e8f1fa') + f('M8 10H12V13H8Z', '#e08a20') + s('M5 5.500h5'),
  conn: s('M10.500 1.500H14.500V5.500H10.500ZM1.500 4.500H4.500V7.500H1.500M4 3.500H10M2.500 8V11', B, 1.300, LB) + s('M1.500 11.500H5.500V14.500H1.500ZM9.500 10.500H14.500V14.500H9.500Z', '#99b', 1),
  props: s('M1.500 6.500H12.500V15.500H1.500ZM3 9.500H5M3 12.500H5M7 9.500H11M7 12.500H11', '#667', 1, '#e5edf7') + f('M3 5L7 0 12 2 15 1 15 6 11 7 8 5 4 8Z', '#e0ad3a') + s('M13.500 0V5', B, 2),
  group: s('M2.500 2.500H9.500V9.500H2.500ZM6.500 6.500H13.500V13.500H6.500Z', '#666') + f('M1 1H4V4H1ZM12 1H15V4H12ZM1 12H4V15H1ZM12 12H15V15H12Z', '#555'), rectg: s('M2.500 1.500H13.500V14.500H2.500Z', '#c4c4c4', 1, '#f8f8f8'),
  rotate: s('M3 7Q4 2 9 3Q14 5 13 10Q11 15 6 14', '#aaa', 2) + c(8, 9, 2.500, L, G) + f('M1 3L7 1 6 7Z', G), flipx: f('M7 2V14H1Z', '#bbb') + s('M9.500 3V13.500H14.500Z', G), flipy: f('M14 7V1L2 7Z', '#ccc') + f('M14 9V15L2 9Z', '#999'),
  binoc: f('M3 1H6V4H10V1H13L14.500 10H9V6H7V10H1.500Z', '#2f62ae') + s('M3 8h3M10 8h3', '#cfe2f8', 2) + s('M1 14Q3 11 5 13.500T9 13.500T14 13', '#11b', 1), binoc2: f('M3 2H6V5H10V2H13L15.500 14H9V8H7V14H.5Z', '#2f62ae') + s('M2.500 12h3M10.500 12h3', '#cfe2f8', 2),
  sheetg: s('M4.500 2.500H14.500V15.500H4.500ZM6 8.500h6M6 10.500h6M6 12.500h6', G, 1, '#eee') + s('M1 4V1H8V5M6 3l2 3 2-3', '#aaa', 1.500), excl: f('M5 0H11L16 5V11L11 16H5L0 11V5Z', '#aaa') + s('M8 3V9M8 11V13', '#fff', 2), xcirc: c(8, 8, 7.700, '#777') + s('M5.500 5.500L10.500 10.500M10.500 5.500L5.500 10.500', '#fff', 2), dots: f('M5 0H11L16 5V11L11 16H5L0 11V5Z', '#aaa') + s('M3 8.500H5.200M7 8.500H9.200M11 8.500H13.200', '#444', 2),
  front: s('M1.500 1.500H8.500V8.500H1.500Z', G, 1, '#eee') + s('M8.500 8.500H14.500V14.500H8.500Z', G, 1, '#eee') + f('M4 4H12V12H4Z', '#aaa'), back: f('M4 4H12V12H4Z', '#d0d0d0') + s('M1.500 1.500H7.500V7.500H1.500ZM8.500 8.500H14.500V14.500H8.500Z', G, 1, '#b4b4b4'),
  foldg: s('M2 3.500H8L13.500 6.500V14.500H2Z', '#888', 1, '#b4b4b4') + s('M3 3H9M7 1l3 2.500L7 6', '#999', 1.500), upg: s('M1.500 4.500H7L8 2.500H13.500V14.500H1.500Z', '#888', 1, '#bbb') + s('M5 12Q10 11 9 6M6.500 8L9 5.500 12 8', '#666', 1.500),
  addpage: page('#345', '#f4f9ff') + s('M11 8V15M7.500 11.500H14.500', '#d4a416', 3), delpage: page('#345', '#f4f9ff') + s('M7 8L14 15M14 8L7 15', '#e02a18', 2.500),
  zoomin: lens(s('M7 4V10M4 7H10', '#224', 1.300)), zoomout: lens(s('M4 7H10', '#224', 1.300)), zoom100: s('M2 15L6 11', '#d89a20', 2.500) + c(8, 8, 4.500, '#d5e8fa', '#567') + f('M3 0H16V7H3Z', '#667') + t('100', 4, 6, 7, '#fff'),
  pencilg: s('M2 2L12 14', '#aaa') + s('M14 3L5 11 3 14 7 13Z', '#999', 1, '#ddd'), gridg: f('M1 1H5V7H1ZM6 1H10V7H6ZM11 1H15V7H11ZM1 9H5V15H1ZM6 9H10V15H6ZM11 9H15V15H11Z', '#a4a4a4'), Ag: t('A', 2, 14, 17, '#999'), Anav: t('A', 2, 14, 17, '#254a90'),
  Ab: t('A', 0, 12, 14, '#2f73c8', 'Liberation Sans') + s('M10.500 1.500H14.500V5.500H10.500Z', B) + f('M8 15L14 6 15.500 8 10 16Z', '#e8bc20') + s('M6 13l3 2', '#4aa0d0', 2),
  al1: s('M2.500 1V15', '#666', 1.500) + s('M4.500 2.500H10.500V6.500H4.500ZM4.500 9.500H13.500V12.500H4.500Z', '#999'), al2: s('M8.500 0V16', '#777') + s('M5 3H12M2 8.500H15M5 14H12', '#888', 2), al3: s('M14.500 1V15', '#666', 1.500) + s('M5.500 2.500H12V6.500H5.500ZM2.500 9.500H12V12.500H2.500Z', '#999'), al4: s('M1 1.500H16', '#666', 1.500) + s('M2.500 4V12H5.500V4M8.500 4V14M12.500 4V12M10.500 6l2-2 2 2', '#999'), al5: s('M0 8.500H16M3.500 5V12M6.500 2V15M9.500 2V15M13.500 5V12', '#999', 1), al6: s('M1 14.500H16', '#666', 1.500) + s('M2.500 5H5.500V12H2.500ZM8.500 3V12M12.500 5V12', '#999'),
  image: s('M.5 1.500H15.500V14.500H.5Z', '#888', 1, '#fff') + f('M2 3H14V13H2Z', '#54a7d8') + f('M2 10Q6 5 9 9T14 9V13H2Z', '#2a5d58'), zoomgraph: box(s('M1 8L4 4 7 9 10 5 15 8', '#258')) + c(8, 8, 4, '#d6eaff', '#456') + s('M11 11L15 15', '#d8902a', 2),
  cursorg: s('M1.500 1V15H16', '#222') + s('M3 7L6 3 9 7 11 4 15 6', '#246', 1.200) + s('M4 9.500h3M4 11.500h3M4 13.500h3M9 9.500h5M9 11.500h5M9 13.500h5', '#222', 1) + s('M8.500 1V15M15.500 1V15', '#aaa'),
  scale1: box(s('M3 13Q8 12 12 5', '#e08838', 1.500) + s('M2 3.500H14M4.500 1.500L2 3.500 4.500 6M11.500 1.500L14 3.500 11.500 6', B, 1.300)), scale2: box(s('M6 14Q11 12 14 5', '#e08838', 1.500) + s('M4 1V15M2 4L4 1 6 4M2 12L4 15 6 12', B, 1.300)), scale3: box(s('M6 14Q11 12 14 5', '#e08838', 1.500) + s('M3 3L8 8M4.500 8.500H8.500V4.500', B, 1.300)), fx: box(s('M6 14Q11 12 14 4', '#e08838', 1.500)) + t('<tspan font-style="italic">fx</tspan>', 2, 12, 13, '#111'),
  play: f('M4 2V14L13 8Z', '#1b9a28'), stopg: f('M3 4H12V13H3Z', '#c0c0c0'), pauseg: s('M5.500 4V13M10.500 4V13', '#c4c4c4', 2.500),
  redg1: s('M.5 .5H15.500V15.500H.5ZM1 8H15M8 1V15', '#aaa', 1, '#eee') + s('M2 14L5 11 10 6 14 2', '#d02828', 1.300) + f('M4 9H7V12H4ZM9 4H12V7H9ZM12 1H15V4H12Z', '#d02828'), redg2: s('M.5 .5H15.500V15.500H.5ZM1 8H15M8 1V15', '#aaa', 1, '#eee') + s('M2 14L6 11 10 6 14 2', '#c66') + s('M4.500 9.500H7.500V12.500H4.500ZM9.500 4.500H12.500V7.500H9.500Z', '#c33', 1, '#fff'),
  orange1: box('<rect x="4" y="4" width="8" height="8" fill="#fff" stroke="#ef8a1c" stroke-width="1.500"/><rect x="2.500" y="2.500" width="11" height="11" fill="none" stroke="#ef8a1c" stroke-dasharray="1 1"/>'), orange2: box(s('M3 5.500H6M4.500 4V7M10 5.500H13M11.500 4V7M3 11.500H6M4.500 10V13M10 11.500H13M11.500 10V13', '#ef8a1c')),
  bars1: box(s('M4.500 3V13M6.500 3V13M8.500 3V13M10.500 3V13M12.500 3V13', '#ef8a1c')), bars2: box(s('M3 3.500H13M3 5.500H13M3 7.500H13M3 9.500H13M3 11.500H13', '#ef8a1c')), bars3: box(s('M4.500 3V13M8.500 3V13M10.500 3V13M12.500 3V13', '#ef8a1c')), bars4: box(s('M6.500 3V13M10.500 3V13', '#ef8a1c')), hline: box(s('M2 9H14', '#111', 1.600)), crossd: box('<path d="M8.500 3V13M3 8.500H13" stroke="#111" stroke-dasharray="2 1"/>'),
  lensx: lens(t('x', 4, 10, 12, '#111')), lensy: lens(t('y', 4, 9.500, 12, '#111')), lensf: lens(t('<tspan font-style="italic">fx</tspan>', 3, 10, 9.500, '#111')), lensg: lens(s('M4 4.500H10M4 6.500H10M4 8.500H10', '#888'), '#999', '#e8e8e8'), tablepen: s('M.5 4.500H12.500V14.500H.5ZM0 7.500H13M0 10.500H13M4.500 4V15M8.500 4V15', B, 1, '#fff') + s('M7 9L10 3 14 0 16 3 11 8Z', '#68a', 1, '#dceafa') + s('M0 4.500H9', B, 2),
  p1: greens('M2 8.500H15') + f('M3 7H6V10H3ZM7 7H10V10H7ZM11 7H14V10H11Z', '#078007'), p2: greens('M2 14Q5 14 6 7T8.500 3T11 7T15 14'), p3: greens('M2 3Q5 3 6 9T8.500 13T11 9T15 3'), p4: greens('M2 11Q3 14 5 11T9 10T12 4T15 11'), p5: greens('M2 5Q4 1 6 7T10 8T14 13L15 14'), p6: greens('M2 13.500H4L12 3.500H15'), p7: greens('M2 12L7 5 11 10 15 12M2 4L7 9'), p8: greens('M2 4L7 11 11 6 15 3M2 12L8 9 14 12'), p9: greens('M2 2L8.500 6 15 2M2 6L8.500 10 15 6M2 10L8.500 14 15 10'), p10: greens('M2 6L8.500 2 15 6M2 10L8.500 6 15 10M2 14L8.500 10 15 14'),
  doc: s('M2.500 1.500H13.500V14.500H2.500ZM4 5.500H12M4 7.500H12M4 9.500H12M4 11.500H12', B, 1, '#fff') + f('M2 1H14V3.500H2Z', '#5a94dd'), num: s('M1.500 2.500H13.500V12H1.500Z', '#8a6a20', 1, '#eab640') + f('M5 0H10V4H5Z', '#777') + s('M3.500 7.500H15.500V15.500H3.500Z', '#456', 1, '#fff') + t('123', 4, 14, 7, '#111'),
  tagh: s('M0 2.500H16M0 14.500H16M2.500 0V5M13.500 0V5M2.500 12V17M13.500 12V17', '#111') + s('M2.500 5.500H13.500V11.500H2.500Z', '#bcd', 1, '#f4f8fc') + s('M3 11L6 8 9 9 13 6', '#d22'), tagv: s('M2.500 0V16M14.500 0V16M0 2.500H5M12 2.500H17M0 13.500H5M12 13.500H17', '#111') + s('M5.500 2.500H11.500V13.500H5.500Z', '#bcd', 1, '#f4f8fc') + s('M5 12L7 8 9 9 12 4', '#d22'),
  dlg: f('M0 0H16V16H0Z', '#e9e9e9') + f('M1 6H5V15H1Z', '#e87878') + s('M5.500 5V15M7.500 6V15', '#aaa') + s('M1 2H7M1 4H7M9 2H11M13 2H15M9 5H11M13 5H15M9 8H11M13 8H15M9 11H11M13 11H15', '#777', .8),
  on: c(8, 8, 7.500, '#067d14', '#000') + s('M4 8L7 11.500 12.500 5', '#fff', 2.500), vl: s('M.5 .5H16.500V15.500H.5ZM2.500 2V14M4.500 2V14M6.500 2V14M8.500 2V14M10.500 2V14M12.500 2V14M14.500 2V14', '#0a8a1a'), hl: s('M.5 .5H16.500V14.500H.5ZM2 2.500H15M2 4.500H15M2 6.500H15M2 8.500H15M2 10.500H15M2 12.500H15', '#0a8a1a'), tb: s('M.5 .5H16.500V15.500H.5Z', '#000', 1, '#fff') + '<path d="M2 2.500H15M2 4.500H15M2 6.500H15M2 8.500H15M2 10.500H15M2 12.500H15" stroke="#000" stroke-dasharray="4 1"/>', wv: s('M.5 .5H16.500V15.500H.5ZM2 11L4 5Q6 2 8 7T12 11L15 10', '#0a8a1a'), more: s('M2 12.500H4.300M7 12.500H9.300M12 12.500H14.300', '#000', 2.300),
  sizegrip: f('M12 0H15V3H12ZM12 5H15V8H12ZM7 5H10V8H7ZM12 10H15V13H12ZM7 10H10V13H7ZM2 10H5V13H2Z', '#b8b8b8'),
  launch: c(3.700, 4, 3.300, '#fff') + c(12.300, 4, 3.300, '#fff') + c(3.700, 12, 3.300, '#fff') + c(12.300, 12, 3.300, '#fff'),
  files: s('M1.200 14V2.300H5.500L7.500 4.300H14.700V14.200H1.200', '#ff6a1c', 1.200) + s('M3.500 7.500H9L10.500 6H14', '#ff8a10', 1.200),
  term: s('M2 1.500H14Q15.200 1.500 15.200 2.700V13Q15.200 14.500 14 14.500H2Q.8 14.500 .8 13V2.700Q.8 1.500 2 1.500Z', '#2a8cf0', 1.200) + s('M3.500 5L7 8 3.500 11M8 11.500H12.500', '#29b6f6', 1.200),
  bag: s('M1.500 6V14.500H14.500V6H1.500M4 9V5Q4 1.500 8 1.500T12 5V9H10V6.500Q8 4.500 6 6.500V9ZM4 5.500H6M10 5.500H12M7 2V5M9 2V5', '#b44cf0', 1.100), fox: s('M3 3Q1 6 1.500 9Q3 14.500 8 14.500T14.500 8Q14.500 5 13 3L12.500 5Q11 4 11.500 1.500Q8 4 9 7Q11 10 8 11Q5 11 5 8Q7 8 8 6.500Q6 6 5 4L3 4.500Z', '#ff6a20', 1.100),
  vscode: f('M11 1L15 3V13L11 15 4.500 9 2 11 1 10 3 8 1 6 2 5 4.500 7ZM11 5L7 8 11 11Z', '#2196dc'), kbd: s('M2 3H14Q15.300 3 15.300 4.300V12Q15.300 13.300 14 13.300H2Q.7 13.300 .7 12V4.300Q.7 3 2 3Z', '#fff', .9) + s('M3 11.500H13', '#fff', .9),
  shield: s('M8 .8L14 2.800V8Q13.500 13 8 15.500Q2.500 13 2 8V2.800ZM8 12A4 4 0 1 0 7.900 12M6 8L7.500 9.500 10.200 6.700', '#f05068', 1), pause: c(8, 8, 7.200, 'none', '#fff', 1.300) + s('M6.500 5V11M9.500 5V11', '#fff', 1.600), chat: s('M2 8V2H5V7.500M4.500 5H7.500V1', '#3daee9', 1.500) + f('M9 4H15V12H13V15L10 12H5V9H9Z', '#fff'), clip: s('M3 3H13V14.500H3Z', '#fff', 1.500) + f('M6 1H10V4.500H6Z', '#fff'),
  bulb: s('M6 12V10Q3.500 8 4.500 5.500Q8 1.500 11.500 5.500Q12.500 8 10 10V12Z', '#f07028', 1.300) + s('M6 14H10M7 15.500H9', '#a03cf0') + s('M0 1L2.500 3M16 1L13.500 3M0 7H2M14 7H16M1 12L3 10.500M15 12L13 10.500', '#f0506c'), volume: f('M1 5H4L8 2V14L4 11H1Z', '#8a8e8c') + s('M10 5Q12 8 10 11M12 3.500Q15 8 12 12.500', '#777b79', 1.400), batt: s('M1.500 4.500H13V12H1.500Z', '#f0445c', 1.500) + f('M14.500 6.500H16V10H14.500ZM2 5H4V11H2Z', '#f0445c'), bt: '<rect x="3" y="0" width="10" height="16" rx="5" fill="#fff"/>' + s('M5 5L11 11 8 13.500V2.500L11 5 5 11', '#333', 1), wifi: f('M0 5Q8-1 16 5L8 14Z', '#fff') + s('M0 4.500Q8-1.500 16 4.500', '#777', 1.500),
  power: c(8, 8, 7, 'none', '#2fc08a', 1.500) + s('M9 2L5 8H8L7 13.500 11.500 7H8Z', '#2fc08a', 1.200), gear: c(8, 8, 4.500, 'none', '#fff', 3.500) + s('M8 0V3M8 13V16M1 4L4 6M15 4L12 6M1 12L4 10M15 12L12 10', '#fff', 3), nx: s('M2 2L14 14M14 2L2 14', '#fff', 3), battbig: s('M3.800 1.800H12.200V6.500H9.500Q8 4.500 3.800 5.500ZM3.800 5V14.300H12.200V8', '#ff8a1c', .8) + f('M6 .8H10V2H6ZM4.500 12.500H11.500V14.500H4.500Z', '#f9a21c')
};

const draw = (name, size, grid = 16) => `<svg width="${size}" height="${size}" viewBox="0 0 ${grid} ${grid}">${icons[name] || ''}</svg>`;
document.querySelectorAll('[data-icon]').forEach(el => { el.innerHTML = draw(el.dataset.icon, el.dataset.size) + el.innerHTML; });

document.querySelectorAll('[data-tools]').forEach(bar => {
  bar.innerHTML = bar.dataset.tools.split(' ').map(name => {
    if (name === '-') return '<i class="sep"></i>';
    if (name === 'bar') return '<i class="sep bar"></i>';
    if (name === 'grip' || name === 'gap') return `<i class="${name}"></i>`;
    const on = name.startsWith('!') ? ' on' : '', cmp = name.startsWith('c:') ? ' cmp' : '';
    name = name.replace(/^(!|c:)/, '');
    if (name === 'v') return `<span class="tool v${on}">${draw('down', 9)}</span>`;
    return `<span class="tool${on}${cmp}">${draw(name, 16)}</span>`;
  }).join('');
});

// Limits table
const rows = [
  ['', '1', 'F', 'v(b)', '1,0,0.2', '0.75,0,0.15', '#00f'], ['', '2', 'F', 'db(v(b))', '1,0,0.2', '250,-1000,250', '#f00'],
  ['', '3', 'F', '4*v(b)^2', '1,0,0.2', '1.25,0,0.25', '#006400'], ['', '4', 'F', 'ph(v(b))/90', '1,0,0.2', '2,-8,2', '#006400'],
  ['', '', 'F', '0.5/sqrt(1+(f/r(f0))^6)', '1,0,0.2', '0.75,0,0.15', '#f00'], ['', '', 'F', '0.5/sqrt(1+(f/r(f0))^-6)', '1,0,0.2', '0.75,0,0.15', '#f00'],
  ['', '', 'F', '0.5/sqrt(1+(r(q)*(f/r(f0)-r(f0)/f))^6)', '1,0,0.2', '0.75,0,0.15', '#f00'], ['', '', 'F', '0.5/sqrt(1+(r(q)*(f/r(f0)-r(f0)/f))^-6)', '1,0,0.2', '0.75,0,0.15', '#f00']
];
const paint = expr => { let k = 0; return expr.replace(/[()]/g, ch => { if (ch === '(') k++; const o = `<span class="k${k}">${ch}</span>`; if (ch === ')') k--; return o; }); };
rows.forEach(r => {
  grid.insertAdjacentHTML('beforeend', r.slice(0, 6).map((v, i) => i === 3 ? `<div class="expr">${paint(v)}</div>` : `<div>${v}</div>`).join('') + '<div class="none"></div>');
  rowicons.insertAdjacentHTML('beforeend', `<div class="rowicons"><span>${draw('on', 16)}</span><span>${draw('vl', 17, 17)}</span><span>${draw('hl', 17, 17)}</span><span style="background:${r[6]}"></span><span class="raised">${draw('tb', 17, 17)}</span><span>${draw('wv', 17, 17)}</span><span class="raised">${draw('more', 13)}</span></div>`);
});

// Third-order band-pass response centred on 1/(2*pi) Hz
const f0 = 1 / (2 * Math.PI), W = x => x / f0 - f0 / x;
const mag = x => .5 / Math.sqrt(1 + W(x) ** 6);
const phase = x => { const w = W(x); return -4 - (Math.atan(w) + Math.atan2(w, 1 - w * w)) * 2 / Math.PI; };
const X0 = 1021, XW = 867;
const charts = [
  { y: [182, 211, 240, 269, 298, 327], l: ['750.000m', '600.000m', '450.000m', '300.000m', '150.000m', '0.000m'], hi: .75, lo: 0, fn: mag, col: '#00f', name: 'v(b) (V)' },
  { y: [356, 385, 414, 443, 472, 501], l: ['0.250K', '0.000K', '-0.250K', '-0.500K', '-0.750K', '-1.000K'], hi: 250, lo: -1000, fn: x => x < .0006 ? -1000 : 20 * Math.log10(mag(x)), col: '#f00', name: 'db(v(b))' },
  { y: [530, 559, 588, 617, 646, 675], l: ['1.250', '1.000', '0.750', '0.500', '0.250', '0.000'], hi: 1.25, lo: 0, fn: x => 4 * mag(x) ** 2, col: '#006400', name: '4*v(b)^2' },
  { y: [704, 732, 759, 787, 814, 842], l: ['2.000', '0.000', '-2.000', '-4.000', '-6.000', '-8.000'], hi: 2, lo: -8, fn: phase, col: '#006400', name: 'ph(v(b))/90' }
];
let out = '<text x="1430" y="180">imp3p.CIR</text><text x="1389" y="874">F (Hz)</text>';
charts.forEach((ch, n) => {
  const top = ch.y[0], bot = ch.y[5];
  out += `<path d="M${X0 + .5} ${top + .5}H1888.500V${bot + .5}H${X0 + .5}Z" fill="none" stroke="#808080"/>`;
  ch.y.forEach((y, i) => {
    if (i && i < 5) out += `<path d="M${X0} ${y + .5}H1888" stroke="#808080" stroke-dasharray="4 3"/>`;
    out += `<text x="1019.500" y="${y + 4}" text-anchor="end">${ch.l[i]}</text>`;
  });
  for (let i = 0; i <= 5; i++) {
    const x = Math.round(X0 + XW * i / 5);
    if (i && i < 5) out += `<path d="M${x + .5} ${top}V${bot}" stroke="#808080" stroke-dasharray="4 3"/>`;
    out += `<text x="${i ? x : X0}" y="${bot + 10}" text-anchor="${i ? 'middle' : 'start'}">${(i / 5).toFixed(3)}</text>`;
  }
  const pts = [];
  for (let i = 0; i <= XW; i++) { const x = Math.max(i / XW, .0005); pts.push(`${X0 + i + .5},${(top + (ch.hi - ch.fn(x)) / (ch.hi - ch.lo) * (bot - top) + .5).toFixed(1)}`); }
  out += `<polyline points="${pts.join(' ')}" fill="none" stroke="${ch.col}" stroke-width="1"/>`;
  out += `<text x="${X0}" y="${bot + 21}" style="fill:${ch.col}">${ch.name}</text>`;
  if (!n) out += `<path d="M${X0} ${bot + 21.5}h33" stroke="#00f"/>`;
});
plots.innerHTML = out;
```
